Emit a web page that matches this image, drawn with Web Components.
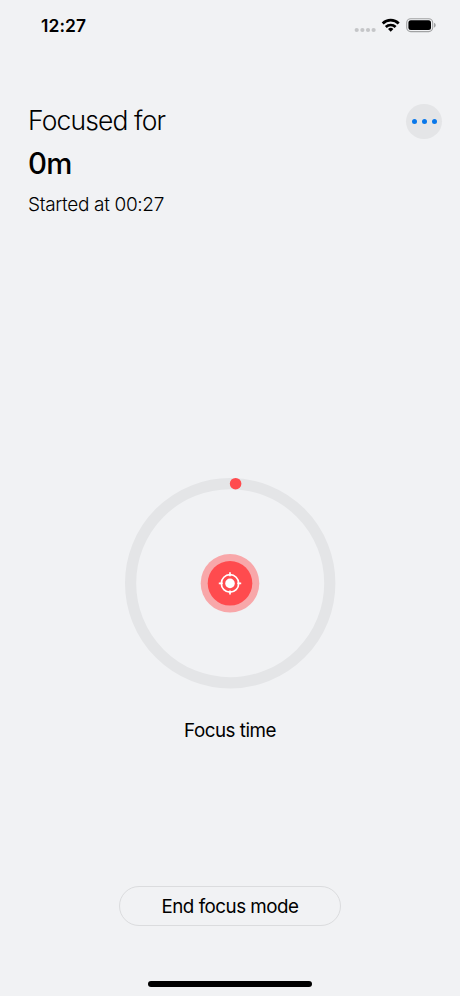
<!DOCTYPE html>
<html lang="en">
<head>
<meta charset="utf-8">
<title>Focus</title>
<style>
html, body { margin: 0; height: 100%; background: #f1f2f4; }
body { font-family: Inter, "Liberation Sans", sans-serif; color: #000; overflow: hidden; }
</style>
</head>
<body>
<focus-screen></focus-screen>
<script>
const define = (name, markup) => {
  const template = document.createElement('template');
  template.innerHTML = markup;
  customElements.define(name, class extends HTMLElement {
    constructor() {
      super();
      this.attachShadow({ mode: 'open' }).append(template.content.cloneNode(true));
    }
  });
};

define('status-bar', `
<style>
:host { display: flex; justify-content: space-between; align-items: center; height: 52px; box-sizing: border-box; padding: 0 24px 0 41px; }
time { font-size: 17.4px; font-weight: 600; line-height: 20px; letter-spacing: 0.1px; }
svg { display: block; }
</style>
<time>12:27</time>
<svg width="82" height="20" viewBox="354 16 82 20">
  <g fill="#c5c6c8"><circle cx="356.7" cy="30" r="2.1"/><circle cx="362.4" cy="30" r="2.1"/><circle cx="368" cy="30" r="2.1"/><circle cx="373.6" cy="30" r="2.1"/></g>
  <g fill="none" stroke="#000" stroke-width="2.7">
    <path d="M382.7 23.5a11.4 11.4 0 0 1 16 0"/>
    <path d="M385.8 27a7 7 0 0 1 9.8 0"/>
  </g>
  <path d="M390.7 31.7l-2.7-2.7a3.9 3.9 0 0 1 5.4 0z"/>
  <rect x="406.7" y="18.7" width="26" height="12.9" rx="4" fill="none" stroke="#a1a2a3" stroke-width="1.1"/>
  <rect x="408.4" y="20.3" width="22.6" height="9.7" rx="2.5"/>
  <path d="M434 22.8c2.3.9 2.3 3.8 0 4.7z" fill="#a1a2a3"/>
</svg>`);

define('more-button', `
<style>
:host { display: block; width: 36px; height: 36px; margin-top: 1px; }
button { display: flex; align-items: center; justify-content: center; gap: 5px; width: 36px; height: 35px; padding: 0; border: 0; border-radius: 50%; background: #e4e5e7; }
i { width: 5px; height: 5px; border-radius: 50%; background: #0877ea; }
</style>
<button aria-label="More"><i></i><i></i><i></i></button>`);

define('focus-summary', `
<style>
:host { display: flex; justify-content: space-between; align-items: flex-start; padding: 51px 18px 0 28px; }
.copy { display: flex; flex-direction: column; }
.title { font-size: 26.4px; font-weight: 300; line-height: 34px; letter-spacing: -0.82px; }
.time { font-size: 29.4px; font-weight: 500; line-height: 40px; margin-top: 7px; letter-spacing: -0.6px; }
.start { font-size: 19px; font-weight: 300; line-height: 26px; margin-top: 8px; letter-spacing: -0.33px; }
</style>
<div class="copy">
  <span class="title"><slot name="title"></slot></span>
  <span class="time"><slot name="time"></slot></span>
  <span class="start"><slot name="start"></slot></span>
</div>
<more-button></more-button>`);

define('focus-dial', `
<style>
:host { display: flex; flex-direction: column; align-items: center; }
svg { display: block; }
.label { margin-top: 28px; font-size: 18.8px; line-height: 26px; letter-spacing: -0.48px; }
</style>
<svg width="214" height="214" viewBox="123 476 214 214">
  <circle cx="230.2" cy="583.2" r="99.6" fill="none" stroke="#e4e5e7" stroke-width="11.2"/>
  <circle cx="235.6" cy="483.7" r="5.8" fill="#ff4b4e"/>
  <circle cx="230" cy="583.3" r="29.3" fill="#f8a7a9"/>
  <circle cx="230" cy="583.3" r="22.3" fill="#ff4b4e"/>
  <g transform="translate(230 583.4)" fill="none" stroke="#fff" stroke-width="1.7">
    <circle r="8.7"/>
    <path d="M0-11.2v4M0 7.2v4M-11.2 0h4M7.2 0h4"/>
    <circle r="4.8" fill="#fff" stroke="none"/>
  </g>
</svg>
<span class="label"><slot></slot></span>`);

define('pill-button', `
<style>
:host { display: block; }
button { display: flex; align-items: center; justify-content: center; width: 222px; height: 40px; padding: 2px 0 0; border: 1px solid #dbdcde; border-radius: 20px; background: transparent; font: 400 18.8px/26px Inter, "Liberation Sans", sans-serif; letter-spacing: -0.5px; color: #000; }
</style>
<button><slot></slot></button>`);

define('home-indicator', `
<style>
:host { display: block; width: 164px; height: 5.6px; border-radius: 3px; background: #000; }
</style>`);

define('focus-screen', `
<style>
:host { display: flex; flex-direction: column; width: 460px; height: 996px; background: #f1f2f4; }
focus-dial { margin-top: auto; }
.footer { display: flex; flex-direction: column; align-items: center; margin-top: 142px; gap: 55px; padding-bottom: 9.4px; }
</style>
<status-bar></status-bar>
<focus-summary>
  <span slot="title">Focused for</span>
  <span slot="time">0m</span>
  <span slot="start">Started at 00:27</span>
</focus-summary>
<focus-dial>Focus time</focus-dial>
<div class="footer">
  <pill-button>End focus mode</pill-button>
  <home-indicator></home-indicator>
</div>`);
</script>
</body>
</html>
